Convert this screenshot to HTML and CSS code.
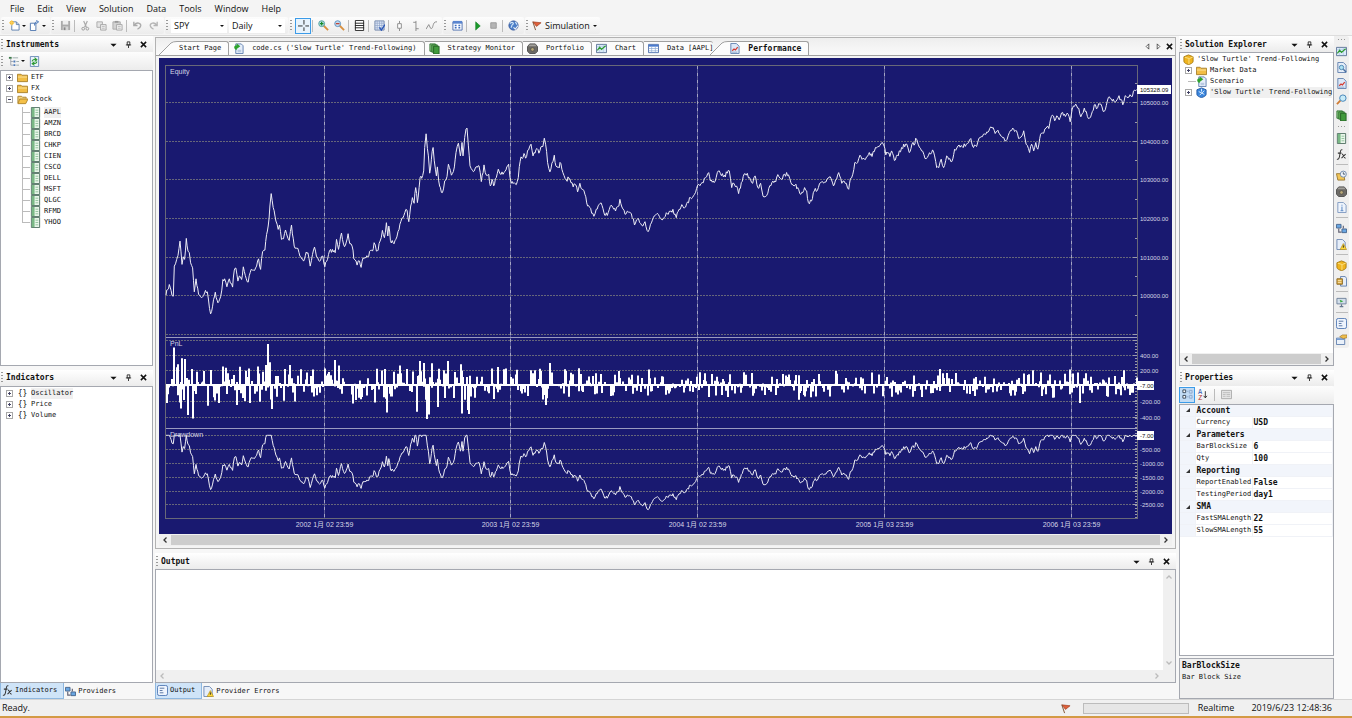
FILE: index.html
```html
<!DOCTYPE html>
<html lang="en">
<head>
  <meta charset="UTF-8">
  <meta name="viewport" content="width=device-width, initial-scale=1">
  <title>Slow Turtle - Performance</title>
  <link rel="stylesheet" href="styles.css">
</head>
<body>
  <!-- Icon sprite -->
  <svg class="sprite" aria-hidden="true">
    <symbol id="i-new" viewBox="0 0 12 12"><path d="M3 2h5l3 3v6H3z" fill="#fff" stroke="#5b7fae"/><path d="M8 2v3h3" fill="none" stroke="#5b7fae"/><circle cx="3" cy="3" r="2.3" fill="#f5b521"/><path d="M3 0v6M0 3h6" stroke="#f8d36b"/></symbol>
    <symbol id="i-open" viewBox="0 0 12 12"><path d="M1.5 3.500h6v8h-6z" fill="#fff" stroke="#4b74ad"/><path d="M6 6c0-3 1-4 3-4M8 .5l2.500 1.500-2.500 2" fill="none" stroke="#3c6fb5"/></symbol>
    <symbol id="i-save" viewBox="0 0 12 12"><path d="M1 1h10v10H1z" fill="#aaa"/><path d="M3 1h6v4H3z" fill="#eee"/><path d="M3 7h6v4H3z" fill="#d5d5d5"/><path d="M4 8h2v3H4z" fill="#888"/></symbol>
    <symbol id="i-cut" viewBox="0 0 12 12"><path d="M4 1l3 7M8 1L5 8" stroke="#aaa" stroke-width="1.300"/><circle cx="3.500" cy="9.500" r="1.500" fill="none" stroke="#999"/><circle cx="8" cy="9.500" r="1.500" fill="none" stroke="#999"/></symbol>
    <symbol id="i-copy" viewBox="0 0 12 12"><path d="M1 2h6v6H1z" fill="#e4e4e4" stroke="#aaa"/><path d="M5 5h6v6H5z" fill="#eee" stroke="#a5a5a5"/><path d="M6.500 7h3M6.500 9h3" stroke="#bbb"/></symbol>
    <symbol id="i-paste" viewBox="0 0 12 12"><path d="M1 2h8v8H1z" fill="#d2d2d2" stroke="#aaa"/><path d="M3 1h4v2H3z" fill="#999"/><path d="M5 5h6v6H5z" fill="#f0f0f0" stroke="#a5a5a5"/><path d="M6.500 7h3M6.500 9h3" stroke="#bbb"/></symbol>
    <symbol id="i-undo" viewBox="0 0 12 12"><path d="M2 2v4h4M2.500 5.500C5 2 10 3 9.500 6.500 9 9 7.500 9.500 6 10" fill="none" stroke="#aaa" stroke-width="1.500"/></symbol>
    <symbol id="i-redo" viewBox="0 0 12 12"><path d="M10 2v4H6M9.500 5.500C7 2 2 3 2.500 6.500 3 9 4.500 9.500 6 10" fill="none" stroke="#b5b5b5" stroke-width="1.500"/></symbol>
    <symbol id="i-cross" viewBox="0 0 12 12"><path d="M6.500 0v5M6.500 8v4M0 6.500h5M8 6.500h4" stroke="#222"/></symbol>
    <symbol id="i-zoomin" viewBox="0 0 12 12"><path d="M6 6l5 5" stroke="#d8903f" stroke-width="2"/><circle cx="4" cy="4" r="3.200" fill="#bfe3e2" stroke="#4a9da0"/><path d="M4 2v4M2 4h4" stroke="#15892a" stroke-width="1.300"/></symbol>
    <symbol id="i-zoomout" viewBox="0 0 12 12"><path d="M6 6l5 5" stroke="#d8903f" stroke-width="2"/><circle cx="4" cy="4" r="3.200" fill="#c3dcf0" stroke="#5a8fc0"/><path d="M2 4h4" stroke="#c03a2a" stroke-width="1.300"/></symbol>
    <symbol id="i-rows" viewBox="0 0 12 12"><path d="M1.500.5h9v11h-9z" fill="#fff" stroke="#222"/><path d="M1 3.500h10M1 6h10M1 8.500h10" stroke="#222"/></symbol>
    <symbol id="i-grid" viewBox="0 0 12 12"><path d="M1 1h10v10H1z" fill="#dfe9f8" stroke="#6d83a8"/><path d="M1 3.500h10M1 6h10M1 8.500h10M3.500 1v10M6 1v10M8.500 1v10" stroke="#8ea3c6" stroke-width=".7"/><path d="M6 8l2 3 4-6" fill="none" stroke="#2a58b8" stroke-width="1.500"/></symbol>
    <symbol id="i-candle" viewBox="0 0 12 12"><path d="M6 1v3M6 9v3" stroke="#888"/><path d="M4 4h4v5H4z" fill="#fff" stroke="#888"/></symbol>
    <symbol id="i-bar" viewBox="0 0 12 12"><path d="M6.500 1v11M3.500 2.500h3M6.500 9.500h3" fill="none" stroke="#888"/></symbol>
    <symbol id="i-line" viewBox="0 0 12 12"><path d="M0 10l3-5 2 4c2 1 2-1 3-4s2-3 4-3" fill="none" stroke="#888"/></symbol>
    <symbol id="i-cal" viewBox="0 0 12 12"><path d="M1 2h10v9H1z" fill="#fff" stroke="#4d6fae"/><path d="M1 1h10v3H1z" fill="#5a85cf"/><path d="M3 6h2M7 6h2M3 8.500h2M7 8.500h2" stroke="#3e6ec0" stroke-width="1.500"/></symbol>
    <symbol id="i-play" viewBox="0 0 12 12"><path d="M4 2l5 4.500L4 11z" fill="#1c9a2b" stroke="#0b7a1c" stroke-width=".6"/></symbol>
    <symbol id="i-stop" viewBox="0 0 12 12"><path d="M3 3h6v6H3z" fill="#b5b5b5" stroke="#999"/></symbol>
    <symbol id="i-globe" viewBox="0 0 12 12"><circle cx="6" cy="6" r="5" fill="#4b7ec8" stroke="#36589a"/><path d="M2 4c3-3 5 0 3 1s0 3-2 3M8 2l2 3" fill="none" stroke="#cfe4f8" stroke-width="1.300"/><path d="M6 8l2 2 3-4" fill="none" stroke="#e8eef6" stroke-width="1.300"/></symbol>
    <symbol id="i-flag" viewBox="0 0 12 12"><path d="M2 2l9 1-5 4z" fill="#e0603a" stroke="#9c3b1c" stroke-width=".7"/><path d="M2 2l3 9" stroke="#7a4a2a"/></symbol>
    <symbol id="i-tree" viewBox="0 0 12 12"><path d="M1 1h3v2H1z" fill="#3c7a4a"/><path d="M3 3v7h3M3 6h3" fill="none" stroke="#8a93a0" stroke-width=".8"/><path d="M6 5h2v2H6zM6 9h2v2H6z" fill="#4c79b8"/><path d="M5 2h6M9 6h3M9 10h3" stroke="#9aa"/></symbol>
    <symbol id="i-refresh" viewBox="0 0 12 12"><path d="M1.500.5h9v11h-9z" fill="#eaf2fb" stroke="#6a8bb8"/><path d="M3.500 6c0-2 2-2.500 4-2M6 1.800L8.500 4 6.500 5.800M8.500 6c0 2-2 2.500-4 2M6 6.200L3.500 8.300 6 10.200" fill="none" stroke="#2f9b35" stroke-width="1.300"/></symbol>
    <symbol id="i-folder" viewBox="0 0 12 12"><path d="M.5 2.500h4l1 1h6v7H.5z" fill="#f1bd45" stroke="#a7802c"/><path d="M1 5.500h10" stroke="#fbe5a2"/></symbol>
    <symbol id="i-folder-open" viewBox="0 0 12 12"><path d="M1 10V2.500h4l1 1h4V5" fill="#f6d680" stroke="#a7802c"/><path d="M3 5.500h9L9.500 10.500H1z" fill="#f4c048" stroke="#b0852b"/></symbol>
    <symbol id="i-sheet" viewBox="0 0 12 12"><path d="M1.500.5h9v11h-9z" fill="#e9f5ea" stroke="#4f6f60"/><path d="M2 1h3v10H2z" fill="#79b885"/><path d="M6 3.500h3M6 6h3M6 8.500h3" stroke="#8fc29a"/></symbol>
    <symbol id="i-script" viewBox="0 0 12 12"><path d="M3 1h6l2 2v8.500H3z" fill="#e6eefa" stroke="#5f7fae"/><path d="M5 8h4M5 9.500h4" stroke="#8fa8cb" stroke-width=".7"/><path d="M4 8C0 6 1 2.500 4 2.500V.5L8 3.500 4 6.500z" fill="#2da32c"/></symbol>
    <symbol id="i-strategy" viewBox="0 0 12 12"><path d="M1 1h6v8H1z" fill="#8ecb84" stroke="#2f7130"/><path d="M3 2h6v8H3z" fill="#5fae57" stroke="#2f7130"/><path d="M5 3.500h6V12H5z" fill="#419a3c" stroke="#246024"/></symbol>
    <symbol id="i-case" viewBox="0 0 12 12"><path d="M3 1h6l2.500 3v5L9 11.500H3L.5 9V4z" fill="#6c6a66" stroke="#4a4a4a"/><path d="M3 1.500h6l1.500 2h-9z" fill="#a3a19c"/><circle cx="6" cy="7" r="2" fill="#b8a878" stroke="#444" stroke-width=".7"/></symbol>
    <symbol id="i-chart" viewBox="0 0 12 12"><path d="M.5 1.500h11v9H.5z" fill="#dcebfa" stroke="#5c7396"/><path d="M1 4h10M4 2v8M8 2v8" stroke="#a9c3e2" stroke-width=".7"/><path d="M1.500 8L4 4.500l2 2.500 4.500-4" fill="none" stroke="#2d9a2f" stroke-width="1.300"/></symbol>
    <symbol id="i-table" viewBox="0 0 12 12"><path d="M.5 1.500h11v9H.5z" fill="#fff" stroke="#4b6fae"/><path d="M1 2h10v2H1z" fill="#4a7bd0"/><path d="M1 6h10M1 8.500h10M4 4v6M8 4v6" stroke="#8fabd6" stroke-width=".8"/></symbol>
    <symbol id="i-report" viewBox="0 0 12 12"><path d="M2 .5h6l3 3v8H2z" fill="#dce8f8" stroke="#5f7fae"/><path d="M3.500 8.500l2-2 1.500 1 2.500-3" fill="none" stroke="#d43c32" stroke-width="1.300"/><path d="M3 10h6" stroke="#8fa8cb"/></symbol>
    <symbol id="i-find" viewBox="0 0 12 12"><path d="M2 .5h6l3 3v8H2z" fill="#e6eef9" stroke="#5f7fae"/><circle cx="6" cy="6" r="2.400" fill="#aee0f2" stroke="#4a86b0"/><path d="M8 8l3 3" stroke="#4a6fa0" stroke-width="1.500"/></symbol>
    <symbol id="i-lens" viewBox="0 0 12 12"><path d="M5 7L1 11" stroke="#cf7c35" stroke-width="2"/><circle cx="7.500" cy="4.500" r="3.500" fill="#c8ebf8" stroke="#3f7fb5"/></symbol>
    <symbol id="i-fx" viewBox="0 0 12 12"><path d="M7 1C5 0 4.600 3 4.200 6S3 12 1 11M2 4.500h4M6.500 5.500c2 0 1.500 4.500 4 4.500M10.500 5.500L6 10" fill="none" stroke="#333" stroke-width="1.100"/></symbol>
    <symbol id="i-clock" viewBox="0 0 12 12"><path d="M.5 4h8l1 7H2z" fill="#f1c557" stroke="#9a7a33"/><circle cx="8" cy="4.500" r="3.300" fill="#eef4fb" stroke="#718aac"/><path d="M8 2.500v2h2" fill="none" stroke="#456"/></symbol>
    <symbol id="i-info" viewBox="0 0 12 12"><path d="M2 .5h6l3 3v8H2z" fill="#eef4fc" stroke="#7d97bf"/><path d="M6.500 5v4M5 9.500h3M6.500 3v1" stroke="#4a7dc0"/></symbol>
    <symbol id="i-net" viewBox="0 0 12 12"><path d="M.5 1.500h5v4h-5zM6.500 6.500h5v4h-5z" fill="#69a6e2" stroke="#46668e"/><path d="M3 6v4h3M8 3v3" fill="none" stroke="#667" stroke-width="1.300"/></symbol>
    <symbol id="i-warn" viewBox="0 0 12 12"><path d="M1 .5h6l3 3v8H1z" fill="#e6eef9" stroke="#6b88b4"/><path d="M8 5l3.500 6.500h-7z" fill="#ffd93b" stroke="#b08a18" stroke-width=".7"/><path d="M8 7v2.500" stroke="#222"/></symbol>
    <symbol id="i-gold" viewBox="0 0 12 12"><path d="M1 3l5-2 5 2v5c0 2-3 3-5 3.500C4 11 1 10 1 8z" fill="#efb41e" stroke="#a67a12"/><path d="M2 3.500l5 1.500 4-2M6.500 5v6" fill="none" stroke="#fbe38b"/></symbol>
    <symbol id="i-blue" viewBox="0 0 12 12"><path d="M1 3l5-2 5 2v5c0 2-3 3-5 3.500C4 11 1 10 1 8z" fill="#3b86dc" stroke="#2259a4"/><path d="M3 5l6 3M9 4L4 9M6 2v3" stroke="#e2f0fd"/></symbol>
    <symbol id="i-orders" viewBox="0 0 12 12"><path d="M5 .5h5l1.500 2v8.500H5z" fill="#e6eef9" stroke="#5f7fae"/><path d="M1 3h6v6H1z" fill="#d8a843" stroke="#8c6a26"/><path d="M2 5h4M2 7h4" stroke="#fbe6ad"/></symbol>
    <symbol id="i-screen" viewBox="0 0 12 12"><path d="M1 1.500h10v6H1z" fill="#d3dfec" stroke="#70819a"/><path d="M4 3l4 1.500L5 6z" fill="#38a93d"/><path d="M6 8v2M4 10.500h4" stroke="#66778e" stroke-width="1.400"/></symbol>
    <symbol id="i-text" viewBox="0 0 12 12"><rect x=".5" y=".5" width="11" height="11" rx="2" fill="#eef4fd" stroke="#5077b4"/><path d="M3 3.500h5M3 6h3M3 8.500h4" stroke="#54729f"/></symbol>
    <symbol id="i-props" viewBox="0 0 12 12"><path d="M.5 4.500h9v7h-9z" fill="#eaf1fa" stroke="#5f7fae"/><path d="M1 5h8v1.500H1z" fill="#6f9ad6"/><path d="M4 3l3-2h5v3l-4 1z" fill="#efbd4a" stroke="#99742a" stroke-width=".7"/></symbol>
    <symbol id="i-cat" viewBox="0 0 12 12"><path d="M1 1h3v3H1zM1 7h3v3H1z" fill="#fff" stroke="#345"/><path d="M5 2.500h2M5 8.500h2M8 1.500h3v3H8zM8 7h3v3H8z" fill="none" stroke="#8fa9cc"/></symbol>
    <symbol id="i-arrow" viewBox="0 0 12 12"><path d="M5 1v10M2.500 8L5 11l2.500-3" fill="none" stroke="#222" stroke-width="1.300"/></symbol>
    <symbol id="i-page" viewBox="0 0 12 12"><path d="M.5 1.500h11v9H.5z" fill="#e5e5e5" stroke="#aaa"/><path d="M2 4h8M2 6h3M6 6h4M2 8h3M6 8h4" stroke="#bbb"/></symbol>
    <symbol id="i-drop" viewBox="0 0 8 8"><path d="M.5 3h7L4 6.500z" fill="#111"/></symbol>
    <symbol id="i-pin" viewBox="0 0 8 8"><path d="M2.500 1h3v3.500h-3zM1 4.500h6M4 5v3" fill="none" stroke="#222"/></symbol>
    <symbol id="i-close" viewBox="0 0 8 8"><path d="M1 1l6 6M7 1L1 7" stroke="#111" stroke-width="1.700"/></symbol>
    <symbol id="i-prev" viewBox="0 0 8 8"><path d="M5.500 1v6L2.500 4z" fill="#fff" stroke="#222" stroke-width=".8"/></symbol>
    <symbol id="i-next" viewBox="0 0 8 8"><path d="M2.500 1v6l3-3z" fill="#fff" stroke="#222" stroke-width=".8"/></symbol>
    <symbol id="i-chev" viewBox="0 0 8 8"><path d="M5.500 1.500L3 4l2.500 2.500" fill="none" stroke="currentColor" stroke-width="1.300"/></symbol>
    <symbol id="i-slant" viewBox="0 0 18 14"><path d="M0 14L12 2Q14 .5 18 .5V14z" fill="#fcfcfc"/><path d="M0 14L12 2Q14 .5 18 .5" fill="none" stroke="#a0a0a0"/></symbol>
  </svg>

  <nav class="menubar">
    <button>File</button><button>Edit</button><button>View</button><button>Solution</button><button>Data</button><button>Tools</button><button>Window</button><button>Help</button>
  </nav>

  <div class="toolbars">
    <div class="toolbar">
      <button class="split" aria-label="New"><svg class="icon"><use href="#i-new"/></svg><i class="caret"></i></button>
      <button class="split" aria-label="Open"><svg class="icon"><use href="#i-open"/></svg><i class="caret"></i></button>
    </div>
    <div class="toolbar">
      <button aria-label="Save"><svg class="icon"><use href="#i-save"/></svg></button><hr>
      <button aria-label="Cut"><svg class="icon"><use href="#i-cut"/></svg></button>
      <button aria-label="Copy"><svg class="icon"><use href="#i-copy"/></svg></button>
      <button aria-label="Paste"><svg class="icon"><use href="#i-paste"/></svg></button><hr>
      <button aria-label="Undo"><svg class="icon"><use href="#i-undo"/></svg></button>
      <button aria-label="Redo"><svg class="icon"><use href="#i-redo"/></svg></button>
    </div>
    <div class="toolbar">
      <label class="combo"><select aria-label="Symbol"><option>SPY</option></select><i class="caret"></i></label>
      <label class="combo"><select aria-label="Bar size"><option>Daily</option></select><i class="caret"></i></label>
    </div>
    <div class="toolbar">
      <button class="pressed" aria-label="Crosshair"><svg class="icon"><use href="#i-cross"/></svg></button><hr>
      <button aria-label="Zoom in"><svg class="icon"><use href="#i-zoomin"/></svg></button>
      <button aria-label="Zoom out"><svg class="icon"><use href="#i-zoomout"/></svg></button><hr>
      <button aria-label="Panes"><svg class="icon"><use href="#i-rows"/></svg></button><hr>
      <button aria-label="Grid"><svg class="icon"><use href="#i-grid"/></svg></button><hr>
      <button aria-label="Candles"><svg class="icon"><use href="#i-candle"/></svg></button>
      <button aria-label="Bars"><svg class="icon"><use href="#i-bar"/></svg></button>
      <button aria-label="Line"><svg class="icon"><use href="#i-line"/></svg></button>
    </div>
    <div class="toolbar">
      <button aria-label="Calendar"><svg class="icon"><use href="#i-cal"/></svg></button><hr>
      <button aria-label="Start"><svg class="icon"><use href="#i-play"/></svg></button>
      <button aria-label="Stop"><svg class="icon"><use href="#i-stop"/></svg></button><hr>
      <button aria-label="Connect"><svg class="icon"><use href="#i-globe"/></svg></button>
    </div>
    <div class="toolbar">
      <button class="mode"><svg class="icon"><use href="#i-flag"/></svg>Simulation<i class="caret"></i></button>
    </div>
  </div>

  <main class="workspace">
    <!-- Left column -->
    <aside class="side">
      <section class="panel">
        <header class="panel-head"><h2>Instruments</h2>
          <button aria-label="Menu"><svg><use href="#i-drop"/></svg></button><button aria-label="Pin"><svg><use href="#i-pin"/></svg></button><button aria-label="Close"><svg><use href="#i-close"/></svg></button>
        </header>
        <div class="toolbar panel-tools">
          <button class="split" aria-label="Group by"><svg class="icon"><use href="#i-tree"/></svg><i class="caret"></i></button>
          <button aria-label="Refresh"><svg class="icon"><use href="#i-refresh"/></svg></button>
        </div>
        <div class="box">
          <ul class="tree">
            <li><div class="node"><b class="toggle plus"></b><svg class="icon"><use href="#i-folder"/></svg><span>ETF</span></div></li>
            <li><div class="node"><b class="toggle plus"></b><svg class="icon"><use href="#i-folder"/></svg><span>FX</span></div></li>
            <li><div class="node"><b class="toggle"></b><svg class="icon"><use href="#i-folder-open"/></svg><span>Stock</span></div>
              <ul class="leaves">
                <li><svg class="icon"><use href="#i-sheet"/></svg><span class="selected">AAPL</span></li>
                <li><svg class="icon"><use href="#i-sheet"/></svg><span>AMZN</span></li>
                <li><svg class="icon"><use href="#i-sheet"/></svg><span>BRCD</span></li>
                <li><svg class="icon"><use href="#i-sheet"/></svg><span>CHKP</span></li>
                <li><svg class="icon"><use href="#i-sheet"/></svg><span>CIEN</span></li>
                <li><svg class="icon"><use href="#i-sheet"/></svg><span>CSCO</span></li>
                <li><svg class="icon"><use href="#i-sheet"/></svg><span>DELL</span></li>
                <li><svg class="icon"><use href="#i-sheet"/></svg><span>MSFT</span></li>
                <li><svg class="icon"><use href="#i-sheet"/></svg><span>QLGC</span></li>
                <li><svg class="icon"><use href="#i-sheet"/></svg><span>RFMD</span></li>
                <li><svg class="icon"><use href="#i-sheet"/></svg><span>YHOO</span></li>
              </ul>
            </li>
          </ul>
        </div>
      </section>
      <section class="panel">
        <header class="panel-head"><h2>Indicators</h2>
          <button aria-label="Menu"><svg><use href="#i-drop"/></svg></button><button aria-label="Pin"><svg><use href="#i-pin"/></svg></button><button aria-label="Close"><svg><use href="#i-close"/></svg></button>
        </header>
        <div class="box">
          <ul class="tree">
            <li><div class="node"><b class="toggle plus"></b><span class="braces">{}</span><span class="selected">Oscillator</span></div></li>
            <li><div class="node"><b class="toggle plus"></b><span class="braces">{}</span><span>Price</span></div></li>
            <li><div class="node"><b class="toggle plus"></b><span class="braces">{}</span><span>Volume</span></div></li>
          </ul>
        </div>
        <div class="dock-tabs">
          <button class="active"><svg class="icon"><use href="#i-fx"/></svg>Indicators</button>
          <button><svg class="icon"><use href="#i-net"/></svg>Providers</button>
        </div>
      </section>
    </aside>

    <!-- Documents and output -->
    <div class="center">
      <section class="documents">
        <div class="doc-tabs">
          <svg class="slant"><use href="#i-slant"/></svg>
          <button class="first">Start Page</button>
          <button><svg class="icon"><use href="#i-script"/></svg>code.cs ('Slow Turtle' Trend-Following)</button>
          <button><svg class="icon"><use href="#i-strategy"/></svg>Strategy Monitor</button>
          <button><svg class="icon"><use href="#i-case"/></svg>Portfolio</button>
          <button><svg class="icon"><use href="#i-chart"/></svg>Chart</button>
          <button class="before-active"><svg class="icon"><use href="#i-table"/></svg>Data [AAPL]</button>
          <svg class="slant over"><use href="#i-slant"/></svg>
          <button class="active"><svg class="icon"><use href="#i-report"/></svg>Performance</button>
          <div class="doc-nav">
            <button aria-label="Scroll left"><svg><use href="#i-prev"/></svg></button><button aria-label="Scroll right"><svg><use href="#i-next"/></svg></button><button aria-label="Close"><svg><use href="#i-close"/></svg></button>
          </div>
        </div>
        <div class="doc-body">
          <svg id="chart" class="chart" role="img" aria-label="Equity, PnL and Drawdown"></svg>
          <div class="hscroll"><svg><use href="#i-chev"/></svg><div class="thumb"></div><svg class="flip"><use href="#i-chev"/></svg></div>
        </div>
      </section>
      <section class="panel output">
        <header class="panel-head"><h2>Output</h2>
          <button aria-label="Menu"><svg><use href="#i-drop"/></svg></button><button aria-label="Pin"><svg><use href="#i-pin"/></svg></button><button aria-label="Close"><svg><use href="#i-close"/></svg></button>
        </header>
        <div class="box output-box">
          <textarea aria-label="Output" readonly></textarea>
          <div class="vscroll"><svg class="up"><use href="#i-chev"/></svg><svg class="down"><use href="#i-chev"/></svg></div>
          <div class="hscroll off"><svg><use href="#i-chev"/></svg><svg class="flip"><use href="#i-chev"/></svg></div>
          <div class="corner"></div>
        </div>
        <div class="dock-tabs">
          <button class="active"><svg class="icon"><use href="#i-text"/></svg>Output</button>
          <button><svg class="icon"><use href="#i-warn"/></svg>Provider Errors</button>
        </div>
      </section>
    </div>

    <!-- Right column -->
    <aside class="side">
      <section class="panel">
        <header class="panel-head"><h2>Solution Explorer</h2>
          <button aria-label="Menu"><svg><use href="#i-drop"/></svg></button><button aria-label="Pin"><svg><use href="#i-pin"/></svg></button><button aria-label="Close"><svg><use href="#i-close"/></svg></button>
        </header>
        <div class="box">
          <ul class="tree solution">
            <li><div class="node root"><svg class="icon"><use href="#i-gold"/></svg><span>'Slow Turtle' Trend-Following</span></div></li>
            <li><div class="node"><b class="toggle plus"></b><svg class="icon"><use href="#i-folder"/></svg><span>Market Data</span></div></li>
            <li><div class="node"><b class="branch"></b><svg class="icon"><use href="#i-script"/></svg><span>Scenario</span></div></li>
            <li><div class="node"><b class="toggle plus"></b><svg class="icon"><use href="#i-blue"/></svg><span class="selected">'Slow Turtle' Trend-Following</span></div></li>
          </ul>
          <div class="hscroll"><svg><use href="#i-chev"/></svg><div class="thumb"></div><svg class="flip"><use href="#i-chev"/></svg></div>
        </div>
      </section>
      <section class="panel">
        <header class="panel-head"><h2>Properties</h2>
          <button aria-label="Menu"><svg><use href="#i-drop"/></svg></button><button aria-label="Pin"><svg><use href="#i-pin"/></svg></button><button aria-label="Close"><svg><use href="#i-close"/></svg></button>
        </header>
        <div class="toolbar panel-tools plain">
          <button class="pressed" aria-label="Categorized"><svg class="icon"><use href="#i-cat"/></svg></button>
          <button class="sort" aria-label="Alphabetical"><span><em>A</em><em>Z</em></span><svg><use href="#i-arrow"/></svg></button><hr>
          <button aria-label="Property pages"><svg class="icon"><use href="#i-page"/></svg></button>
        </div>
        <div class="box">
          <table class="props">
            <colgroup><col class="fold-col"><col class="name-col"><col></colgroup>
            <tbody>
              <tr class="group"><td><i class="fold"></i></td><th colspan="2">Account</th></tr>
              <tr><td></td><th>Currency</th><td>USD</td></tr>
              <tr class="group"><td><i class="fold"></i></td><th colspan="2">Parameters</th></tr>
              <tr><td></td><th>BarBlockSize</th><td>6</td></tr>
              <tr><td></td><th>Qty</th><td>100</td></tr>
              <tr class="group"><td><i class="fold"></i></td><th colspan="2">Reporting</th></tr>
              <tr><td></td><th>ReportEnabled</th><td>False</td></tr>
              <tr><td></td><th>TestingPeriod</th><td>day1</td></tr>
              <tr class="group"><td><i class="fold"></i></td><th colspan="2">SMA</th></tr>
              <tr><td></td><th>FastSMALength</th><td>22</td></tr>
              <tr><td></td><th>SlowSMALength</th><td>55</td></tr>
            </tbody>
          </table>
        </div>
        <div class="prop-help"><strong>BarBlockSize</strong><p>Bar Block Size</p></div>
      </section>
    </aside>

    <!-- Window shortcuts -->
    <div class="strip">
      <div class="strip-inner">
        <i class="dots"></i>
        <button aria-label="Chart"><svg class="icon"><use href="#i-chart"/></svg></button>
        <button aria-label="Find"><svg class="icon"><use href="#i-find"/></svg></button>
        <button aria-label="Performance"><svg class="icon"><use href="#i-report"/></svg></button>
        <button aria-label="Search"><svg class="icon"><use href="#i-lens"/></svg></button>
        <button aria-label="Strategy Monitor"><svg class="icon"><use href="#i-strategy"/></svg></button>
        <i class="dots"></i>
        <button aria-label="Instruments"><svg class="icon"><use href="#i-sheet"/></svg></button>
        <button aria-label="Indicators"><svg class="icon"><use href="#i-fx"/></svg></button><hr>
        <button aria-label="Orders"><svg class="icon"><use href="#i-clock"/></svg></button>
        <button aria-label="Portfolio"><svg class="icon"><use href="#i-case"/></svg></button>
        <button aria-label="Account"><svg class="icon"><use href="#i-info"/></svg></button><hr>
        <button aria-label="Providers"><svg class="icon"><use href="#i-net"/></svg></button>
        <button aria-label="Provider Errors"><svg class="icon"><use href="#i-warn"/></svg></button><hr>
        <button aria-label="Solution"><svg class="icon"><use href="#i-gold"/></svg></button>
        <button aria-label="Scripts"><svg class="icon"><use href="#i-orders"/></svg></button><hr>
        <button aria-label="Monitor"><svg class="icon"><use href="#i-screen"/></svg></button><hr>
        <button aria-label="Output"><svg class="icon"><use href="#i-text"/></svg></button>
        <button aria-label="Properties"><svg class="icon"><use href="#i-props"/></svg></button>
      </div>
    </div>
  </main>

  <footer class="statusbar">
    <span class="ready">Ready.</span>
    <svg class="icon"><use href="#i-flag"/></svg>
    <div class="progress"></div>
    <span class="clock-mode">Realtime</span>
    <span>2019/6/23 12:48:36</span>
  </footer>

  <script src="chart.js"></script>
</body>
</html>
```

FILE: styles.css
```css
/* Base */
* {
  box-sizing: border-box;
}
body {
  margin: 0;
  height: 100vh;
  display: flex;
  flex-direction: column;
  overflow: hidden;
  background: #f7f7f7;
  color: #111;
  font: 9px/12px "Open Sans", "Noto Sans", sans-serif;
}
button, select, textarea {
  font: inherit;
  color: inherit;
  border: 0;
  padding: 0;
  margin: 0;
  background: none;
}
ul, h2, p {
  margin: 0;
  padding: 0;
  list-style: none;
}
.sprite {
  display: none;
}
.icon {
  width: 11px;
  height: 11px;
  flex: none;
}

/* Menu and toolbars */
.menubar {
  display: flex;
  height: 17px;
  padding-left: 4px;
  background: #f4f4f4;
}
.menubar button {
  padding: 0 7px 0 6px;
}
.toolbars {
  display: flex;
  gap: 1px;
  height: 19px;
  padding: 0 1px 1px;
  background: #f4f4f4;
  border-bottom: 1px solid #ddd;
}
.toolbar {
  display: flex;
  align-items: center;
  padding-right: 3px;
  background: linear-gradient(#fdfdfd, #ececec);
  border-radius: 2px;
}
.toolbar::before, .panel-head::before {
  content: "";
  width: 2px;
  height: 11px;
  margin: 0 3px 0 1px;
  background: repeating-linear-gradient(#999 0 1px, transparent 1px 3px);
}
.toolbar button {
  display: flex;
  align-items: center;
  justify-content: center;
  min-width: 16px;
  height: 16px;
}
.toolbar .split {
  gap: 2px;
  width: 20px;
}
.toolbar hr {
  width: 1px;
  height: 12px;
  margin: 0 2px 0 1px;
  border: 0;
  background: #bbb;
}
.toolbar .pressed {
  border: 1px solid #3b9be8;
  background: #e8f3fc;
}
.toolbar .mode {
  gap: 3px;
}
.caret {
  flex: none;
  border: 2px solid transparent;
  border-top-color: #111;
  border-bottom: 0;
}
.combo {
  display: flex;
  align-items: center;
  width: 56px;
  padding: 0 3px;
  background: #fff;
}
.combo + .combo {
  margin-left: 2px;
}
.combo select {
  flex: 1;
  min-width: 0;
  height: 14px;
  appearance: none;
}

/* Columns */
.workspace {
  flex: 1;
  display: flex;
  min-height: 0;
  font: 7px/11px "DejaVu Sans Mono", "Liberation Mono", monospace;
}
.side {
  width: 155px;
  flex: none;
  display: flex;
  flex-direction: column;
  gap: 4px;
}
.side:first-child {
  width: 153px;
}
.center {
  flex: 1;
  min-width: 0;
  display: flex;
  flex-direction: column;
  gap: 4px;
  margin: 0 3px 0 2px;
}
.panel {
  flex: 1;
  min-height: 0;
  display: flex;
  flex-direction: column;
}
.panel-head {
  display: flex;
  align-items: center;
  height: 16px;
  flex: none;
  padding-right: 2px;
  background: linear-gradient(#fff, #ececec);
}
.panel-head h2 {
  flex: 1;
  font-size: 8px;
  font-weight: bold;
}
.panel-head button, .doc-nav button {
  width: 15px;
  height: 14px;
  display: flex;
  align-items: center;
  justify-content: center;
}
.panel-head svg, .doc-nav svg {
  width: 7px;
  height: 7px;
}
.panel-tools {
  height: 18px;
  flex: none;
}
.panel-tools.plain {
  gap: 1px;
}
.panel-tools.plain::before {
  display: none;
}
.plain .pressed {
  background: #c2dcf5;
}
.sort span {
  display: grid;
  line-height: 6px;
}
.sort em {
  font-style: normal;
  color: #2c55b0;
}
.sort em + em {
  color: #b03030;
}
.sort svg {
  width: 8px;
  height: 11px;
}
.box {
  flex: 1;
  min-height: 0;
  display: flex;
  flex-direction: column;
  justify-content: space-between;
  background: #fff;
  border: 1px solid #a5a8b0;
  overflow: hidden;
}

/* Trees */
.tree {
  padding: 1px 0 0 5px;
}
.node {
  display: flex;
  align-items: center;
  height: 11px;
}
.node span, .leaves span {
  margin-left: 3px;
  white-space: nowrap;
}
.tree .selected {
  background: #f0f0f0;
}
.toggle {
  width: 7px;
  height: 7px;
  margin-right: 4px;
  border: 1px solid #a8a8a8;
  background: linear-gradient(#446, #446) center / 3px 1px no-repeat, #fff;
}
.toggle.plus {
  background: linear-gradient(#446, #446) center / 3px 1px no-repeat, linear-gradient(#446, #446) center / 1px 3px no-repeat, #fff;
}
.branch {
  width: 8px;
  height: 1px;
  margin: 0 0 0 3px;
  background: #bbb;
}
.leaves {
  padding: 2px 0 0 16px;
}
.leaves li {
  display: flex;
  align-items: center;
  height: 11px;
  background: linear-gradient(#bbb, #bbb) 0 0 / 1px 100% no-repeat;
}
.leaves li:last-child {
  background-size: 1px 6px;
}
.leaves li::before {
  content: "";
  width: 8px;
  height: 1px;
  background: #bbb;
}
.node .braces {
  width: 11px;
  margin: 0;
  font-size: 8px;
  text-align: center;
}
.solution {
  padding-left: 5px;
}
.solution .root {
  margin-left: -2px;
}

/* Scroll bars */
.hscroll {
  display: flex;
  align-items: center;
  justify-content: space-between;
  height: 12px;
  flex: none;
  background: #f0f0f0;
  color: #333;
}
.hscroll svg, .vscroll svg {
  width: 12px;
  height: 8px;
  flex: none;
}
.hscroll .thumb {
  flex: 1;
  height: 10px;
  background: #cdcdcd;
}
.flip {
  transform: rotate(180deg);
}
.hscroll.off, .vscroll {
  color: #bbb;
}
.vscroll {
  display: flex;
  flex-direction: column;
  justify-content: space-between;
  padding: 3px 0;
}
.vscroll, .corner {
  background: #f0f0f0;
}
.up {
  transform: rotate(90deg);
}
.down {
  transform: rotate(270deg);
}

/* Bottom tabs of docked windows */
.dock-tabs {
  display: flex;
  height: 16px;
  flex: none;
}
.dock-tabs button {
  display: flex;
  align-items: center;
  gap: 2px;
  padding: 0 6px 0 1px;
}
.dock-tabs .active {
  background: #cfe4f8;
  border: 1px solid #8fb8e0;
  border-top: 0;
}

/* Documents */
.documents {
  flex: 7;
  min-height: 0;
  display: flex;
  flex-direction: column;
  margin-top: 1px;
  border: 1px solid #b2b2b2;
  background: #f4f4f4;
}
.doc-tabs {
  display: flex;
  align-items: flex-end;
  height: 18px;
  flex: none;
  padding-left: 3px;
  border-bottom: 1px solid #a0a0a0;
  background: linear-gradient(#eee, #fafafa);
}
.doc-tabs > button {
  display: flex;
  align-items: center;
  gap: 8px;
  height: 14px;
  padding: 0 7px 0 4px;
  white-space: nowrap;
  background: #fcfcfc;
  border: solid #a0a0a0;
  border-width: 1px 1px 0 0;
  border-radius: 0 3px 0 0;
}
.doc-tabs .first {
  padding-left: 2px;
}
.doc-tabs .before-active {
  padding-right: 0;
  border-right: 0;
}
.slant {
  width: 18px;
  height: 14px;
  flex: none;
}
.slant.over {
  margin-left: -3px;
}
.doc-tabs .active {
  padding-left: 1px;
  font-size: 8px;
  font-weight: bold;
}
.doc-nav {
  display: flex;
  align-self: center;
  margin-left: auto;
}
.doc-nav button {
  width: 11px;
}
.doc-body {
  flex: 1;
  min-height: 0;
  display: flex;
  flex-direction: column;
  padding: 2px 3px;
}
.chart {
  flex: 1;
  min-height: 0;
  width: 100%;
  background: #191970;
  font-family: "Liberation Sans", "Noto Sans CJK SC", sans-serif;
}
.chart text {
  font-size: 7px;
  fill: #d5d5e5;
}
.chart .scale {
  font-size: 6px;
}
.chart .tag {
  font-size: 6px;
  fill: #111;
}
.chart .grid {
  stroke: #66667a;
  stroke-dasharray: 2 1;
}
.chart .year {
  stroke: #a4a4c4;
  stroke-dasharray: 4 1 1 1;
}
.chart .frame {
  fill: none;
  stroke: #686878;
}
.chart .divider {
  stroke: #9a9ac0;
}
.chart .tick {
  stroke: #9a9aae;
}
.chart .series {
  fill: none;
  stroke: #eeeef6;
}
.chart .bars {
  fill: none;
  stroke: #fff;
  stroke-width: 2px;
}

/* Output */
.output {
  flex: 2;
}
.output-box {
  display: grid;
  grid-template: 1fr 12px / 1fr 12px;
}
.output textarea {
  resize: none;
  outline: 0;
  width: 100%;
  height: 100%;
}

/* Property grid */
.props {
  width: 100%;
  table-layout: fixed;
  border-collapse: collapse;
}
.fold-col {
  width: 15px;
}
.name-col {
  width: 57px;
}
.props td, .props th {
  height: 12px;
  padding: 0 0 0 1px;
  border: solid #f0f2f7;
  border-width: 0 1px 1px 0;
  font-weight: normal;
  text-align: left;
  white-space: nowrap;
  overflow: hidden;
}
.props td:first-child {
  background: #f2f5fb;
}
.props td:last-child, .props .group th {
  font-size: 8px;
  font-weight: bold;
}
.props .group th {
  background: #f2f5fb;
}
.fold {
  display: block;
  margin-left: 5px;
  border: 2px solid #333;
  border-top-color: transparent;
  border-left-color: transparent;
  width: 4px;
}
.prop-help {
  height: 41px;
  flex: none;
  margin-top: 2px;
  padding: 1px 2px;
  background: #f0f0f0;
  border: 1px solid #a5a8b0;
}
.prop-help strong {
  font-size: 8px;
}

/* Shortcut strip */
.strip {
  width: 18px;
  flex: none;
  background: #fafafa;
}
.strip-inner {
  display: flex;
  flex-direction: column;
  align-items: center;
  width: 15px;
  padding-bottom: 1px;
  background: #efefef;
  border-radius: 0 3px 3px 0;
}
.strip button {
  height: 16px;
  display: flex;
  align-items: center;
}
.strip hr {
  width: 12px;
  height: 1px;
  margin: 2px 0;
  border: 0;
  background: #bbb;
}
.dots {
  width: 8px;
  height: 1px;
  margin: 3px 0;
  background: repeating-linear-gradient(90deg, #999 0 1px, transparent 1px 3px);
}

/* Status bar */
.statusbar {
  display: flex;
  align-items: center;
  height: 19px;
  flex: none;
  padding: 0 20px 0 2px;
  background: #f0f0f0;
  border-top: 1px solid #d5d5d5;
  border-bottom: 2px solid #d39a45;
}
.ready {
  flex: 1;
}
.progress {
  width: 106px;
  height: 11px;
  margin: 0 9px 0 12px;
  background: #e6e6e6;
  border: 1px solid #bcbcbc;
}
.clock-mode {
  margin-right: 17px;
}
```

FILE: chart.js
```js
// Equity levels as x,y pairs on a 2868 unit wide time scale, 3 units per pixel
const EARLY = [48,707,53,690,58,675,66,708,70,710,73,620,80,600,84,588,90,545,96,615,100,592,104,600,109,537,114,575,118,580,122,610,128,625,133,697,138,658,146,705,152,712,158,712,164,700,172,697,182,763,188,740,196,698,204,730,212,712,219,660,224,658,231,682,238,658,248,683,253,632,258,626,264,665,268,650,275,660,280,622,286,648,295,668,304,630,314,633,320,620,326,598,332,630,338,577,345,572,350,525,355,500,360,440,364,403,370,445,378,485,385,510,389,497,395,540,401,538,407,512,412,530,418,543,425,497,433,560,444,567,450,590,458,598,464,600,469,578,474,580,481,620,488,585,494,563,500,592,512,603,519,590,525,622,533,600,542,570,556,580,560,540,566,570,575,521,584,562,595,523,600,553,607,560,612,598,622,617,629,605,634,624,640,595,654,592,662,573,668,575,673,550,680,575,685,573,691,545,698,513,704,535,710,490,714,530,717,500,722,543,730,550,738,540,748,510,753,487,760,475,765,460,772,453,777,487,783,440,788,415,793,432,798,385,803,430,808,385,811,355,816,357,822,335,825,265,829,224,833,268,836,290,840,342,845,300,850,265,857,330,860,350,863,323,867,365,872,385,878,400,885,365,892,352,896,315,905,348,914,323,919,280,926,252,932,290,937,250,940,290,945,235,949,210,952,207,956,260,961,320,968,333,974,335,980,322,988,320,995,367,1003,317,1010,348,1017,345,1022,380,1027,360,1032,380,1040,355,1046,330,1052,345,1057,338,1063,340,1069,332,1077,315,1081,355,1085,372,1093,370,1100,376,1106,355,1109,322,1114,293,1118,298,1123,283,1128,297,1137,272,1144,255,1150,290,1162,268,1168,282,1174,263,1180,262,1184,237,1188,255,1194,310,1201,338,1207,312,1214,288,1219,320,1226,323,1234,313,1240,340,1250,362,1258,358,1264,370,1271,383,1276,375,1284,398,1291,372,1298,390,1306,405,1314,440,1323,447,1333,471,1340,450,1352,432,1360,447,1368,468,1376,460,1382,442,1390,445,1398,455,1408,440,1411,420,1417,443,1430,463,1440,458,1448,475,1455,497,1467,478,1480,500];
const LATE = [16,487,25,517,32,495,40,475,52,462,66,482,78,460,92,455,97,450,107,475,115,450,123,436,134,443,148,415,160,405,169,378,182,370,192,355,201,340,206,365,217,370,226,340,232,335,244,353,255,342,261,335,268,385,274,372,282,380,288,403,296,370,307,343,320,355,329,372,336,350,344,385,352,372,359,410,370,408,385,370,396,368,402,346,412,360,422,345,433,347,440,370,452,378,460,385,469,405,480,385,486,395,491,430,500,425,508,395,520,385,532,367,545,360,557,358,564,380,573,360,579,340,588,372,598,372,608,390,613,358,620,345,626,310,634,310,641,288,650,297,660,293,668,280,676,292,686,265,696,262,706,250,711,260,716,287,722,282,728,292,733,275,741,304,752,290,762,265,777,255,784,280,792,255,798,258,803,237,810,255,820,275,830,298,840,288,852,272,858,290,864,325,870,325,877,300,884,325,893,290,902,298,908,307,916,270,926,260,938,262,950,255,963,238,971,265,980,262,990,235,1000,225,1010,218,1018,208,1028,205,1034,223,1042,213,1050,230,1065,245,1072,228,1085,207,1096,215,1102,238,1112,230,1117,215,1124,255,1134,280,1140,255,1146,275,1152,250,1158,270,1166,225,1175,222,1182,207,1190,208,1195,180,1200,168,1207,185,1213,170,1220,182,1230,160,1238,172,1246,165,1252,188,1258,150,1268,135,1277,148,1283,173,1293,147,1305,178,1314,165,1322,137,1332,145,1338,135,1351,157,1363,115,1372,120,1380,127,1388,122,1394,110,1405,137,1412,110,1420,115,1426,107,1433,112,1439,93,1446,91];

// Days with an unusually large profit (negative = up) or loss
const SPIKES = { 72: -112, 85: -62, 97: -80, 106: -78, 92: 70, 113: 90, 130: 100, 173: 62, 184: -45, 218: -55, 261: 60, 330: 50, 355: -123, 348: -60, 361: -68, 366: 72, 404: -48, 421: -60, 557: -75, 568: -58, 610: 55, 676: 52, 712: 82, 750: -58, 801: 80, 810: -72, 822: -66, 831: 102, 837: 88, 848: -65, 865: 66, 894: -72, 934: -62, 938: 85, 954: 75, 959: 87, 1044: -54, 1188: 60, 1202: -66, 1289: -50, 1409: -42, 1499: -46, 1948: 44, 2061: -42, 2371: -48, 2652: -44, 2764: -46, 2792: 54, 2925: -44 };

const TIME_START = 48;
const TIME_END = 2964;

// Small seeded generator, so that every redraw gives the same bars
let seed = 7;
function random() {
  seed = (seed * 16807) % 2147483647;
  return seed / 2147483647;
}

// Turn the flat lists into points and fill in the days between them
function buildEquity() {
  const points = [];
  for (let i = 0; i < EARLY.length; i += 2) points.push([EARLY[i], EARLY[i + 1]]);
  for (let i = 0; i < LATE.length; i += 2) points.push([1470 + LATE[i] * 1.033, LATE[i + 1]]);

  const out = [points[0]];
  for (let i = 1; i < points.length; i++) {
    const [x0, y0] = points[i - 1];
    const [x1, y1] = points[i];
    const steps = Math.max(1, Math.round((x1 - x0) / 3));
    for (let s = 1; s < steps; s++) {
      const t = s / steps;
      out.push([x0 + (x1 - x0) * t, y0 + (y1 - y0) * t + (random() - 0.5) * 14]);
    }
    out.push([x1, y1]);
  }
  return out;
}

function draw() {
  const svg = document.getElementById('chart');
  const width = svg.clientWidth;
  const height = svg.clientHeight;
  const left = 7;
  const right = width - 35;
  const k = height / 475;
  const X = t => left + (t - TIME_START) / (TIME_END - TIME_START) * (right - left);
  const Y = y => Math.round(y * k) + 0.5;
  const parts = [];
  seed = 7;

  const line = (x1, y1, x2, y2, cls) => parts.push(`<line x1="${x1}" y1="${y1}" x2="${x2}" y2="${y2}" class="${cls}"/>`);
  const text = (x, y, value, cls = '', anchor = 'start') => parts.push(`<text x="${x}" y="${y}" class="${cls}" text-anchor="${anchor}">${value}</text>`);

  // Horizontal grid with the value scale
  const levels = [
    [44, '105000.00'], [83, '104000.00'], [121, '103000.00'], [160, '102000.00'], [199, '101000.00'], [237, '100000.00'], [275, ''],
    [281, ''], [296, '400.00'], [311, '200.00'], [342, '-200.00'], [358, '-400.00'],
    [376, ''], [390, '-500.00'], [404, '-1000.00'], [418, '-1500.00'], [432, '-2000.00'], [445, '-2500.00']
  ];
  for (const [y, label] of levels) {
    line(left, Y(y), right, Y(y), 'grid');
    line(right - 4, Y(y), right, Y(y), 'tick');
    if (label) text(right + 3, Y(y) + 2, label, 'scale');
  }
  for (let y = 25; y < 275; y += 38.6) line(right - 2, Y(y), right, Y(y), 'tick');
  for (let y = 284; y < 459; y += 3) line(right - 2, Y(y), right, Y(y), 'tick');

  // Year lines
  const years = [[521, '2002 1月 02 23:59'], [1081, '2003 1月 02 23:59'], [1644, '2004 1月 02 23:59'], [2205, '2005 1月 03 23:59'], [2766, '2006 1月 03 23:59']];
  for (const [t, label] of years) {
    const x = Math.round(X(t)) + 0.5;
    line(x, Y(7), x, Y(459), 'year');
    text(x, Y(467), label, '', 'middle');
  }

  parts.push(`<rect x="${left - 0.5}" y="${Y(7)}" width="${right - left + 1}" height="${Y(459) - Y(7)}" class="frame"/>`);
  line(left, Y(278), right, Y(278), 'divider');
  line(left, Y(369), right, Y(369), 'divider');

  // Equity
  const equity = buildEquity();
  parts.push(`<polyline class="series" points="${equity.map(([t, y]) => `${X(t).toFixed(1)},${((1 + y / 3) * k).toFixed(1)}`).join(' ')}"/>`);

  // PnL bars, on whole pixels
  const zero = Math.round(326 * k);
  let bars = '';
  const bar = (t, size) => { bars += `M${Math.round(X(t))} ${zero}v${(size / 3 * k).toFixed(1)}`; };
  for (let t = TIME_START + 3; t < TIME_END; t += 3.6) {
    const reach = t < 400 ? 58 : t < 1250 ? 50 : 38;
    const r = random() * 2 - 1;
    bar(t, r * Math.abs(r) * reach);
  }
  for (const t in SPIKES) bar(Number(t), SPIKES[t]);
  parts.push(`<path class="bars" d="M${left} ${zero}H${right}${bars}"/>`);

  // Drawdown follows the distance from the running high
  let high = Infinity;
  const drawdown = equity.map(([t, y]) => {
    high = Math.min(high, y);
    return `${X(t).toFixed(1)},${((376.5 + (y - high) * 0.24) * k).toFixed(1)}`;
  });
  parts.push(`<polyline class="series" points="${drawdown.join(' ')}"/>`);

  // Pane titles and last values
  text(left + 4, Y(15), 'Equity');
  text(left + 4, Y(286), 'PnL');
  text(left + 4, Y(377), 'Drawdown');
  for (const [y, label, w] of [[31, '105328.09', 34], [326, '-7.00', 17], [376, '-7.00', 17]]) {
    parts.push(`<rect x="${right}" y="${Y(y) - 4.5}" width="${w}" height="9" fill="#fff"/>`);
    text(right + 3, Y(y) + 2, label, 'tag');
  }

  svg.innerHTML = parts.join('');
}

draw();
window.addEventListener('resize', draw);
```
